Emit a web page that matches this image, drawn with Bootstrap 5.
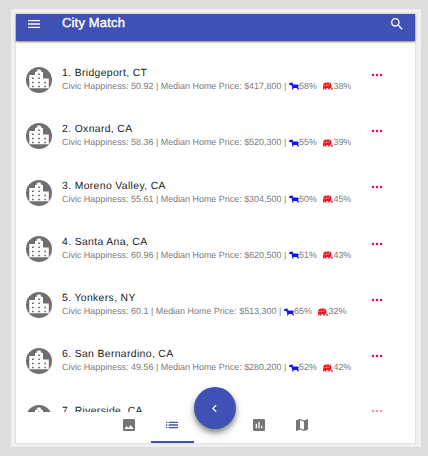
<!DOCTYPE html>
<html lang="en">
<head>
<meta charset="utf-8">
<meta name="viewport" content="width=device-width, initial-scale=1">
<title>City Match</title>
<link href="https://cdn.jsdelivr.net/npm/bootstrap@5.3.0/dist/css/bootstrap.min.css" rel="stylesheet">
<style>
html,body{height:100%}
body{background:#ddd;font-family:"Liberation Sans",Arial,sans-serif;padding:9px 7px 9px 11px;overflow:hidden;line-height:1;text-rendering:geometricPrecision}
.frame{background:#f0f0f0;padding:5px 6px 4px 5px;height:438px}
.app{background:#fff;height:429px;box-shadow:0 0 1px 1px #e2e2e2}
.topbar{background:#3f51b5;height:27px;padding:2px 10px 0;box-shadow:0 1px 2px rgba(0,0,0,.5);z-index:2;color:#fff;flex:none}
.topbar h1{font-size:13px;letter-spacing:.17px;margin:-1px 0 0 20px;line-height:16px;-webkit-text-stroke:.4px #fff}
.cities{height:371px;padding-top:10.8px;overflow:hidden;flex:none}
.city{height:56.3px;padding-left:10px}
.avatar{width:26px;height:26px;margin-right:10px;flex:none}
.city-text{width:309px;flex:none}
.city-name{font-size:10.4px;letter-spacing:.36px;line-height:13px;color:#1c1c1c;white-space:nowrap}
.stats{font-size:8.95px;line-height:13px;color:#7c7c7c;white-space:nowrap}
.stats-main{margin-right:2.8px}
.party{width:10px;height:10px;flex:none}
.gop{margin-left:6.5px}
.more{width:12px;height:4px;margin-top:-10.5px;flex:none}
.city:last-child .more{opacity:.45;margin-top:-13px}
.tabs{height:31px;flex:none}
.tab{width:43.2px;color:#757575;border-bottom:2px solid transparent;padding-bottom:4px}
.tab svg{width:16px;height:16px}
.tab.on{color:#3f51b5;border-color:#3f51b5}
.fab{width:42px;height:42px;background:#3f51b5;left:177.5px;top:373px;box-shadow:0 3px 5px rgba(0,0,0,.35),0 5px 9px rgba(0,0,0,.2);z-index:3}
</style>
<script src="https://cdn.jsdelivr.net/npm/bootstrap@5.3.0/dist/js/bootstrap.bundle.min.js"></script>
</head>
<body>
<svg class="d-none" aria-hidden="true">
<symbol id="building" viewBox="0 0 26 26"><circle cx="13" cy="13" r="13" fill="#6f6f6f"/><path fill="#fff" d="M3.3 8H9V5h1.6V3.6h1V2.4h2.8v1.2h1V5H17v6.5h5.8v9.7H3.3z"/><path stroke="#555" stroke-width="1.5" stroke-dasharray="1.5 2.6" d="M6.8 10.6v9.8M13 6.5v14M19.2 14.7v6"/></symbol>
<symbol id="donkey" viewBox="0 0 10 10"><path fill="#1414ff" d="M0 3 .2 2.2 1.6 2 2 1.1l.8.8.7-.7.2 1.6.8.7h4.2l1.3 1.2-.4 1-.7-.6.2 1 1 2.4H9L7.7 6.9H4.8L4 8.5H3l.2-2.1L2.4 4 .4 3.9z"/></symbol>
<symbol id="elephant" viewBox="0 0 10 10"><path fill="#f01018" d="M.2 4.6C.2 2.2 1.5 1.4 3 1.4h3c1.6 0 2.3 1.1 2.4 3.1l.1 2.8c.2.6.8.5.9 0h.6v1.2H7.9L7.6 6.8h-.8v1.8H5.2V7.1H3.4v1.5H1.6V6.7L.8 8.5H0z"/><path stroke="#fff" stroke-width=".6" d="M.5 4.6h5.6M3.6 2.2v1.6M6.4 1.9v2.2" opacity=".7"/></symbol>
<symbol id="dots" viewBox="0 0 12 4"><g fill="#f50057"><circle cx="2" cy="2" r="1.25"/><circle cx="6" cy="2" r="1.25"/><circle cx="10" cy="2" r="1.25"/></g></symbol>
</svg>
<div class="frame">
<main class="app position-relative d-flex flex-column">
<header class="topbar d-flex align-items-start position-relative">
<svg width="16" height="16" viewBox="0 0 24 24" fill="currentColor"><path d="M3 18h18v-2H3v2zm0-5h18v-2H3v2zm0-7v2h18V6H3z"/></svg>
<h1>City Match</h1>
<svg class="ms-auto" width="16" height="16" viewBox="0 0 24 24" fill="currentColor"><path d="M15.5 14h-.79l-.28-.27A6.47 6.47 0 0 0 16 9.5 6.5 6.5 0 1 0 9.5 16c1.61 0 3.09-.59 4.23-1.57l.27.28v.79l5 4.99L20.49 19l-4.99-5zm-6 0A4.5 4.5 0 1 1 14 9.5 4.5 4.5 0 0 1 9.5 14z"/></svg>
</header>
<section class="cities" id="cities"></section>
<nav class="tabs d-flex justify-content-center">
<div class="tab d-flex align-items-center justify-content-center"><svg viewBox="0 0 24 24" fill="currentColor"><path d="M21 19V5a2 2 0 0 0-2-2H5a2 2 0 0 0-2 2v14a2 2 0 0 0 2 2h14a2 2 0 0 0 2-2zM8.5 13.5l2.5 3.01L14.5 12l4.5 6H5l3.5-4.5z"/></svg></div>
<div class="tab on d-flex align-items-center justify-content-center"><svg viewBox="0 0 24 24" fill="currentColor"><path d="M3 13h2v-2H3v2zm0 4h2v-2H3v2zm0-8h2V7H3v2zm4 4h14v-2H7v2zm0 4h14v-2H7v2zM7 7v2h14V7H7z"/></svg></div>
<div class="tab"></div>
<div class="tab d-flex align-items-center justify-content-center"><svg viewBox="0 0 24 24" fill="currentColor"><path d="M19 3H5a2 2 0 0 0-2 2v14a2 2 0 0 0 2 2h14a2 2 0 0 0 2-2V5a2 2 0 0 0-2-2zM9 17H7v-7h2v7zm4 0h-2V7h2v10zm4 0h-2v-4h2v4z"/></svg></div>
<div class="tab d-flex align-items-center justify-content-center"><svg viewBox="0 0 24 24" fill="currentColor"><path d="M20.5 3l-.16.03L15 5.1 9 3 3.36 4.9a.5.5 0 0 0-.36.48V20.5c0 .28.22.5.5.5l.16-.03L9 18.9l6 2.1 5.64-1.9a.5.5 0 0 0 .36-.48V3.5a.5.5 0 0 0-.5-.5zM15 19l-6-2.11V5l6 2.11V19z"/></svg></div>
</nav>
<div class="fab rounded-circle position-absolute d-flex align-items-center justify-content-center"><svg width="15" height="15" viewBox="0 0 24 24" fill="#fff"><path d="M15.41 7.41 14 6l-6 6 6 6 1.41-1.41L10.83 12z"/></svg></div>
</main>
</div>
<script>
const cities=[["Bridgeport, CT","50.92","417,800",58,38],["Oxnard, CA","58.36","520,300",55,39],["Moreno Valley, CA","55.61","304,500",50,45],["Santa Ana, CA","60.96","620,500",51,43],["Yonkers, NY","60.1","513,300",65,32],["San Bernardino, CA","49.56","280,200",52,42],["Riverside, CA"]];
document.getElementById("cities").innerHTML=cities.map((c,i)=>`<div class="city d-flex align-items-center">
<svg class="avatar"><use href="#building"/></svg>
<div class="city-text"><div class="city-name">${i+1}. ${c[0]}</div>
<div class="stats d-flex align-items-center">${c[1]?`<span class="stats-main">Civic Happiness: ${c[1]} | Median Home Price: $${c[2]} |</span><svg class="party"><use href="#donkey"/></svg><span>${c[3]}%</span><svg class="party gop"><use href="#elephant"/></svg><span>${c[4]}%</span>`:"&nbsp;"}</div></div>
<svg class="more"><use href="#dots"/></svg></div>`).join("");
</script>
</body>
</html>
